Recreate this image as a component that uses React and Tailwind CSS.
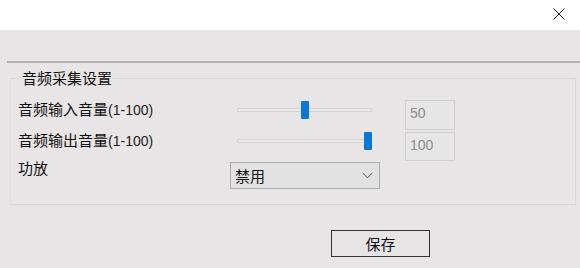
import React from 'react';

const cjk = { fontFamily: '"Noto Sans CJK SC", "Noto Sans", sans-serif' };

function Slider({ thumbLeft }) {
    return (
        <div className="relative mt-[1px] h-[18px] w-[135px]">
            <div className="absolute left-0 right-0 top-[7px] h-[4px] rounded-[1px] border border-[#d4d4d4] bg-[#e9e9e9]"></div>
            <div
                className="absolute top-0 h-[18px] w-[8px] rounded-[1px] bg-[#0a78d7]"
                style={{ left: thumbLeft }}
            ></div>
        </div>
    );
}

function ValueBox({ value, className }) {
    return (
        <div
            className={`ml-[33px] w-[50px] border border-[#d0cece] bg-[#e7e6e6] pl-[4px] pt-[4px] text-[14px] leading-[16px] text-[#8c8c8c] ${className}`}
            style={{ fontFamily: '"Liberation Sans", Arial, sans-serif' }}
        >
            {value}
        </div>
    );
}

function Label({ text, className = '' }) {
    return (
        <div className={`w-[219px] text-[15px] leading-[18px] text-[#111] ${className}`} style={cjk}>
            {text}
            <span className="text-[14px] text-[#222]" style={{ fontFamily: '"Liberation Sans", Arial, sans-serif' }}>
                (1-100)
            </span>
        </div>
    );
}

export default function App() {
    return (
        <div className="h-[268px] w-[580px] overflow-hidden bg-[#e7e5e5]">
            {/* barre de titre */}
            <div className="flex h-[30px] items-start justify-end bg-white pr-[15px] pt-[8px]">
                <svg width="12" height="12" viewBox="0 0 12 12" className="block">
                    <path d="M0.5 0.5 L11.5 11.5 M11.5 0.5 L0.5 11.5" stroke="#222" strokeWidth="1" fill="none" />
                </svg>
            </div>

            <div className="pt-[31px]">
                <div className="ml-[7px] border-t-2 border-[#b3b2b2]"></div>

                <fieldset className="ml-[10px] mr-[4px] mt-[6px] border border-[#d9d7d7] border-l-[#e1dfdf] px-[7px] pb-[15px] pt-[13px]">
                    <legend className="ml-[3px] px-[1px] text-[15px] leading-[18px] text-[#111]" style={cjk}>
                        音频采集设置
                    </legend>

                    <div className="flex h-[31px] items-start">
                        <Label text="音频输入音量" />
                        <Slider thumbLeft={64} />
                        <ValueBox value="50" className="h-[30px]" />
                    </div>

                    <div className="flex h-[30px] items-start">
                        <Label text="音频输出音量" />
                        <Slider thumbLeft={127} />
                        <ValueBox value="100" className="mt-[1px] h-[29px]" />
                    </div>

                    <div className="flex h-[28px] items-start">
                        <div className="-mt-[2px] w-[212px] text-[15px] leading-[18px] text-[#111]" style={cjk}>
                            功放
                        </div>
                        <div className="mt-[1px] flex h-[27px] w-[150px] items-center justify-between border border-[#acacac] bg-[#e3e2e2] pl-[4px] pr-[6px]">
                            <span className="text-[15px] leading-[18px] text-[#111]" style={cjk}>禁用</span>
                            <svg width="11" height="7" viewBox="0 0 11 7" className="block">
                                <polyline points="0.5,0.8 5.5,5.8 10.5,0.8" stroke="#555" strokeWidth="1" fill="none" />
                            </svg>
                        </div>
                    </div>
                </fieldset>

                <div className="mt-[25px] flex pl-[331px]">
                    <button
                        type="button"
                        className="flex h-[27px] w-[99px] items-center justify-center border border-[#333] bg-[#e6e4e4] text-[15px] leading-[18px] text-[#111]"
                        style={cjk}
                    >
                        保存
                    </button>
                </div>
            </div>
        </div>
    );
}
